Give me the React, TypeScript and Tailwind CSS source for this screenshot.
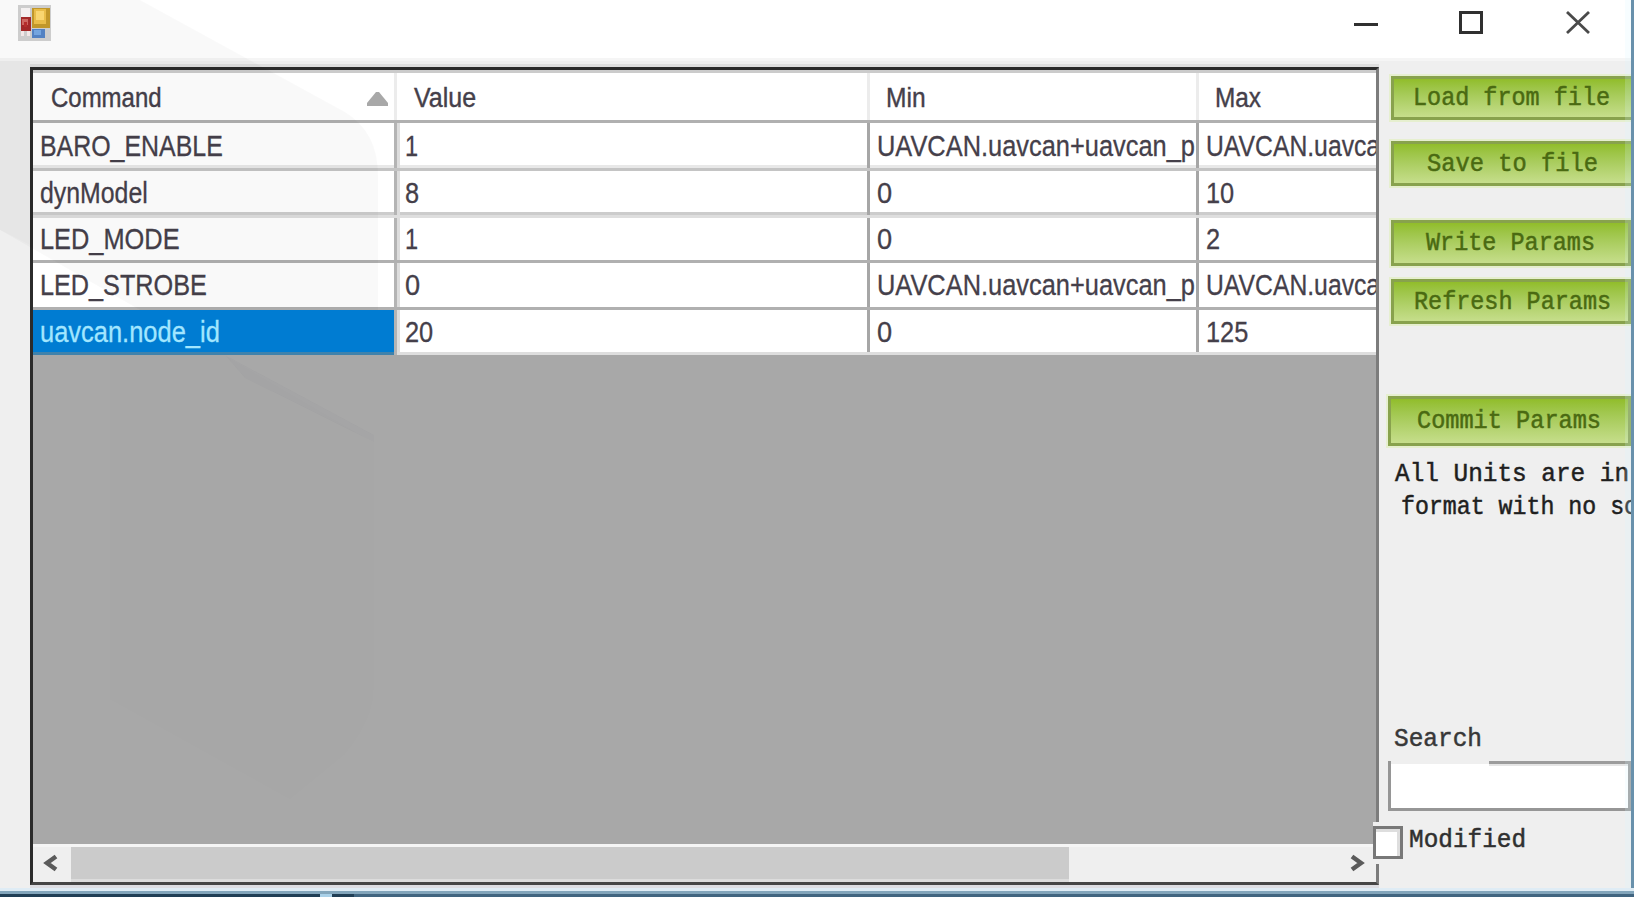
import { useLayoutEffect, useRef } from "react";

type FitProps = { text: string; width: number; className?: string };

// Draws a line of text condensed or widened to the given width.
function Fit({ text, width, className = "" }: FitProps) {
  const ref = useRef<HTMLSpanElement>(null);
  useLayoutEffect(() => {
    const el = ref.current;
    if (el) el.style.transform = `scaleX(${width / el.offsetWidth})`;
  }, [width]);
  return (
    <span ref={ref} className={`inline-block shrink-0 origin-left whitespace-pre ${className}`}>
      {text}
    </span>
  );
}

type Cell = [string, number];
type Row = { cells: Cell[]; className: string; selected?: boolean };

const headers: { text: string; width: number; className: string; label: string }[] = [
  { text: "Command", width: 111, className: "w-[364px] border-r-3 border-[#ececec]", label: "pl-[18px]" },
  { text: "Value", width: 62, className: "w-[473px] border-r-3 border-[#ececec]", label: "pl-[17px]" },
  { text: "Min", width: 40, className: "w-[329px] border-r-3 border-[#ececec]", label: "pl-[16px]" },
  { text: "Max", width: 46, className: "w-[177px]", label: "pl-[16px]" },
];

const rows: Row[] = [
  {
    cells: [["BARO_ENABLE", 183], ["1", 13], ["UAVCAN.uavcan+uavcan_p", 318], ["UAVCAN.uavca", 174]],
    className: "h-[48px] border-b-3 border-[#c4c4c4] shadow-[inset_0_-3px_0_#e8e8e8]",
  },
  {
    cells: [["dynModel", 108], ["8", 14], ["0", 15], ["10", 28]],
    className: "h-[47px] border-b-3 border-[#dedede] shadow-[inset_0_-3px_0_#cccccc]",
  },
  {
    cells: [["LED_MODE", 140], ["1", 13], ["0", 15], ["2", 14]],
    className: "h-[45px] border-b-3 border-[#b0b0b0]",
  },
  {
    cells: [["LED_STROBE", 167], ["0", 15], ["UAVCAN.uavcan+uavcan_p", 318], ["UAVCAN.uavca", 174]],
    className: "h-[47px] border-b-3 border-[#b0b0b0]",
  },
  {
    cells: [["uavcan.node_id", 180], ["20", 28], ["0", 15], ["125", 42]],
    className: "h-[45px] border-b-3 border-[#dedede]",
    selected: true,
  },
];

const columns = [
  "w-[364px] border-r-3 border-[#b4b4b4] pl-[7px]",
  "w-[473px] border-r-3 border-[#a6a6a6] pl-[8px] shadow-[inset_3px_0_0_#dddddd]",
  "w-[329px] border-r-3 border-[#a6a6a6] pl-[7px]",
  "w-[177px] pl-[7px]",
];

function FormIcon() {
  return (
    <svg width="33" height="36" viewBox="0 0 33 36" shapeRendering="crispEdges">
      <rect width="33" height="36" fill="#d2d2d2" />
      <rect x="3" y="3" width="9" height="9" fill="#faf7f7" />
      <rect x="3" y="26" width="3" height="5" fill="#f8eeee" />
      <rect x="9" y="26" width="3" height="5" fill="#f8eeee" />
      <rect x="3" y="12" width="10" height="14" fill="#a72b2b" />
      <rect x="4" y="14" width="6" height="6" fill="#d36a64" />
      <rect x="6" y="17" width="3" height="5" fill="#b92f2d" />
      <rect x="14" y="3" width="18" height="20" fill="#c69b2c" />
      <rect x="16" y="4" width="12" height="15" fill="#efc24b" />
      <rect x="18" y="6" width="8" height="9" fill="#ffdc73" />
      <rect x="14" y="24" width="13" height="9" fill="#5586c8" />
      <rect x="16" y="25" width="7" height="5" fill="#77a9e5" />
    </svg>
  );
}

const buttonBase =
  "flex items-center border-3 border-[#88a24d] bg-linear-to-b from-[#91bd29] to-[#c6de8b] text-[#4a6a12] shadow-[0_0_0_2px_rgba(222,238,180,0.55)]";

const buttons = [
  { text: "Load from file", width: 197, className: "ml-[3px] h-[44px] border-r-0 pl-[19px] pt-[1px]" },
  { text: "Save to file", width: 171, className: "ml-[3px] mt-[21px] h-[45px] border-r-0 pl-[33px] pt-[2px]" },
  { text: "Write Params", width: 169, className: "ml-[3px] mr-[3px] mt-[34px] h-[46px] pl-[32px] pt-[1px]" },
  { text: "Refresh Params", width: 197, className: "ml-[3px] mr-[3px] mt-[13px] h-[45px] pl-[20px] pt-[1px]" },
  { text: "Commit Params", width: 184, className: "mr-[3px] mt-[72px] h-[50px] pl-[26px]" },
];

export default function App() {
  return (
    <div className="relative h-[902px] w-[1638px] overflow-hidden bg-white font-['Liberation_Sans',sans-serif] text-[#45404a]">
      <div className="flex h-[897px] w-[1634px] flex-col overflow-hidden bg-[#efefef]">
        <header className="flex h-[61px] shrink-0 items-start justify-between border-b-3 border-[#f5f5f5] bg-white pt-[5px] pl-[18px] pr-[34px]">
          <FormIcon />
          <svg width="250" height="40" viewBox="1350 5 250 40" fill="none" stroke="#303030" strokeWidth="3">
            <path d="M1354 24.5H1378" />
            <path d="M1460.5 12.5h21v20h-21z" />
            <path d="M1567 12l22 21M1589 12l-22 21" stroke="#4a4a4a" strokeWidth="2.8" />
          </svg>
        </header>

        <div className="flex min-h-0 flex-1 pl-[30px] pt-[6px]">
          <main className="flex h-[818px] w-[1349px] shrink-0 flex-col border-3 border-[#2b2b2b] border-r-[#7c7c7c] border-b-[#454545] bg-[#a8a8a8] shadow-[0_-3px_0_#dedede,0_3px_0_#dddde2]">
            <div className="flex h-[53px] shrink-0 border-b-3 border-[#b0b0b0] bg-white text-[27px] leading-none shadow-[inset_0_3px_0_#cbcbcb]">
              {headers.map((h) => (
                <div key={h.text} className={`mt-[3px] flex shrink-0 items-center justify-between pt-[3px] ${h.className} ${h.label}`}>
                  <Fit text={h.text} width={h.width} className="[-webkit-text-stroke:0.4px]" />
                  {h.text === "Command" && (
                    <svg width="21" height="14" viewBox="0 0 21 14" className="mr-[6px] mt-[2px]">
                      <path d="M9 0h3l9 11v3H0v-3z" fill="#a8a8a8" />
                    </svg>
                  )}
                </div>
              ))}
            </div>
            {rows.map((r) => (
              <div key={r.cells[0][0]} className={`flex shrink-0 bg-white text-[29px] leading-none ${r.className}`}>
                {r.cells.map(([text, width], i) => (
                  <div
                    key={i}
                    className={`flex shrink-0 items-center overflow-hidden ${columns[i]} ${
                      r.selected ? (i === 0 ? "-mb-[3px] bg-[#007cd2] text-[#a2e6ff] shadow-[inset_0_-3px_0_#3f82ac]" : "pt-[3px]") : "pt-[1px]"
                    }`}
                  >
                    <Fit text={text} width={width} className="[-webkit-text-stroke:0.3px]" />
                  </div>
                ))}
              </div>
            ))}
            <div className="mt-auto flex h-[38px] shrink-0 border-t-3 border-[#f5f5f5] bg-[#efefef]">
              <div className="flex w-[38px] items-center pb-[4px] pl-[9px]">
                <svg width="16" height="18" viewBox="0 0 16 18" fill="none" stroke="#5b5b5b" strokeWidth="4.5">
                  <path d="M14 2.5L5 9l9 6.5" />
                </svg>
              </div>
              <div className="w-[998px] border-b-3 border-[#dcdcdc] bg-[#cbcbcb]" />
              <div className="ml-auto flex items-center pb-[4px] pr-[10px]">
                <svg width="16" height="18" viewBox="0 0 16 18" fill="none" stroke="#5b5b5b" strokeWidth="4.5">
                  <path d="M2 2.5L11 9 2 15.5" />
                </svg>
              </div>
            </div>
          </main>

          <aside className="ml-[9px] flex w-[246px] shrink-0 flex-col pt-[9px] font-['Liberation_Mono',monospace] text-[25px] leading-none text-[#1f1f1f]">
            {buttons.map((b) => (
              <button key={b.text} className={`${buttonBase} ${b.className}`}>
                <Fit text={b.text} width={b.width} className="[-webkit-text-stroke:0.5px]" />
              </button>
            ))}
            <p className="mt-[12px] flex h-[33px] items-center pl-[7px]">
              <Fit text="All Units are in" width={234} className="[-webkit-text-stroke:0.5px]" />
            </p>
            <p className="flex h-[33px] items-center pl-[13px]">
              <Fit text="format with no sc" width={237} className="[-webkit-text-stroke:0.5px]" />
            </p>
            <label className="mt-[198px] flex h-[39px] items-start pt-[5px] pl-[6px] text-[#383838]">
              <Fit text="Search" width={88} className="[-webkit-text-stroke:0.5px]" />
            </label>
            <div className="mr-[3px] flex h-[50px] border-b-3 border-l-3 border-[#969696] bg-white">
              <div className="h-[3px] w-[98px] bg-[#efefef]" />
              <div className="h-[5px] flex-1 border-t-3 border-[#9c9c9c] bg-[#e5e5e5]" />
              <div className="w-[3px] bg-[#9c9c9c]" />
            </div>
            <label className="relative -ml-[15px] mt-[12px] flex h-[41px] items-center text-[#303030]">
              <span className="-mt-[3px] h-[33px] w-[30px] shrink-0 border-3 border-[#787878] bg-white shadow-[inset_-3px_3px_0_#dedede,0_-4px_0_#efefef,0_5px_0_#efefef]" />
              <span className="-mt-[6px] flex pl-[6px]">
                <Fit text="Modified" width={117} className="[-webkit-text-stroke:0.5px]" />
              </span>
            </label>
          </aside>
        </div>
      </div>

      <svg className="pointer-events-none absolute left-0 top-0" width="400" height="820" viewBox="0 0 400 820">
        <path d="M0 0H140L345 112Q378 132 378 175V310H140L0 230Z" fill="#000" opacity="0.022" />
        <path d="M0 61H30V245L0 230Z" fill="#000" opacity="0.012" />
        <path d="M225 355L374 442V690Q374 720 345 755L290 800L110 700V355Z" fill="#202040" opacity="0.005" />
        <path d="M225 355L374 435V442L245 378Z" fill="#202060" opacity="0.025" />
      </svg>

      {/* Window frame over the clipped right and bottom edges */}
      <div className="pointer-events-none absolute left-0 top-0 h-[897px] w-[1634px] border-r-3 border-[#6991ac] shadow-[inset_-6px_0_0_rgba(215,244,255,0.2)]" />
      <div className="pointer-events-none absolute left-0 top-[888px] h-[9px] w-[1634px] border-t-3 border-b-3 border-t-[#dfecf5] border-b-[#416580] bg-[#82a5bb]">
        <div className="mt-[3px] flex h-[3px] w-[354px] justify-end bg-[#203e55]">
          <div className="mr-[22px] h-[3px] w-[12px] bg-[#a9d0e8]" />
        </div>
      </div>
    </div>
  );
}
